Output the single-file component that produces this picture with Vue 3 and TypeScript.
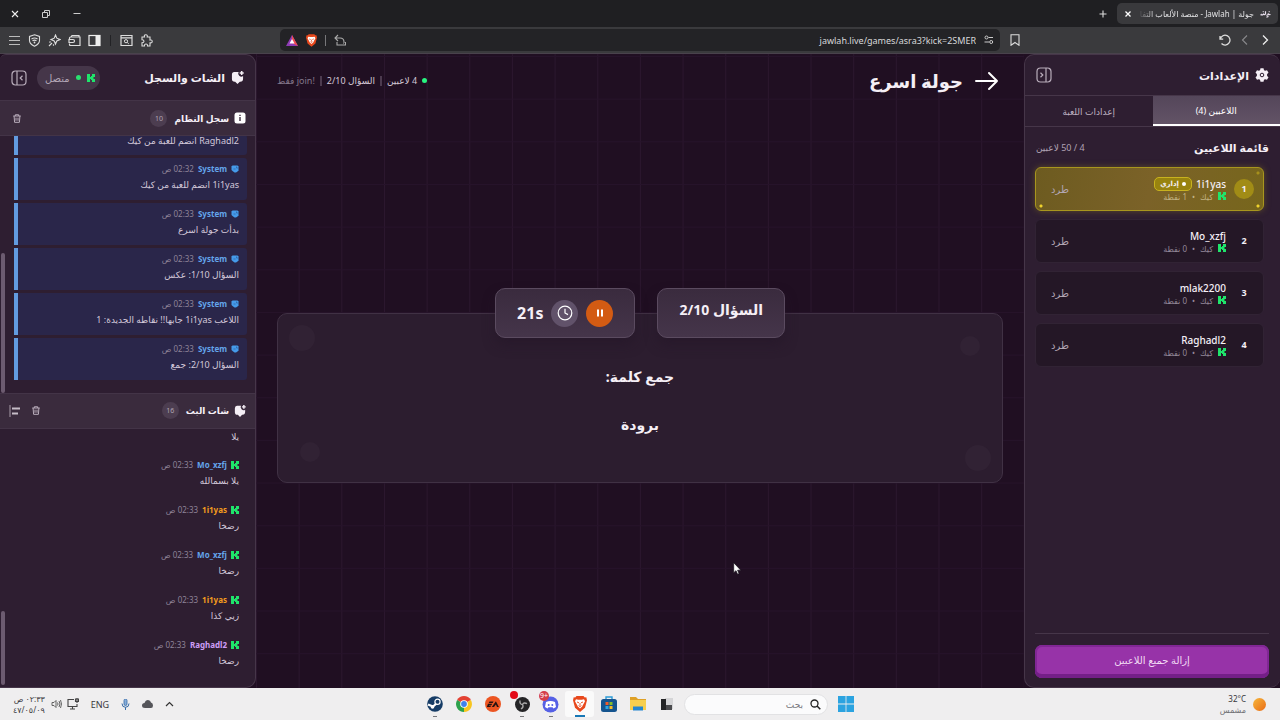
<script setup lang="ts">
import { ref } from 'vue'

interface Message { name?: string; time?: string; text: string; tone?: string }
interface Player { name: string; points: number; admin: boolean }

const players: Player[] = [
  { name: '1i1yas', points: 1, admin: true },
  { name: 'Mo_xzfj', points: 0, admin: false },
  { name: 'mlak2200', points: 0, admin: false },
  { name: 'Raghadl2', points: 0, admin: false },
]

const log: Message[] = [
  { text: 'Raghadl2 انضم للعبة من كيك' },
  { name: 'System', time: '02:32 ص', text: '1i1yas انضم للعبة من كيك', tone: 'system' },
  { name: 'System', time: '02:33 ص', text: 'بدأت جولة اسرع', tone: 'system' },
  { name: 'System', time: '02:33 ص', text: 'السؤال 1/10: عكس', tone: 'system' },
  { name: 'System', time: '02:33 ص', text: 'اللاعب 1i1yas جابها!! نقاطه الجديدة: 1', tone: 'system' },
  { name: 'System', time: '02:33 ص', text: 'السؤال 2/10: جمع', tone: 'system' },
]

const chat: Message[] = [
  { text: 'يلا' },
  { name: 'Mo_xzfj', time: '02:33 ص', text: 'يلا بسمالله', tone: 'blue' },
  { name: '1i1yas', time: '02:33 ص', text: 'رضخا', tone: 'orange' },
  { name: 'Mo_xzfj', time: '02:33 ص', text: 'رضخا', tone: 'blue' },
  { name: '1i1yas', time: '02:33 ص', text: 'زيي كذا', tone: 'orange' },
  { name: 'Raghadl2', time: '02:33 ص', text: 'رضخا', tone: 'violet' },
]

const apps = ['file', 'folder', 'store', 'brave', 'discord', 'obs', 'ea', 'chrome', 'steam']
const running = ['brave', 'discord', 'obs', 'steam']
const search = ref('')
const url = ref('jawlah.live/games/asra3?kick=2SMER')
</script>

<template>
  <div class="desktop" dir="rtl">
    <svg class="sprite" aria-hidden="true">
      <symbol id="kick" viewBox="0 0 8 8"><path d="M0 0h3v3h1V2h1V0h3v3H6.500v2H8v3H5V6H4V5H3v3H0z" fill="#1fe56b" /></symbol>
      <symbol id="bubble" viewBox="0 0 14 14"><path d="M3.500 1h4.700a3.400 3.400 0 0 0 4.800 4.500V8q0 3.500-3 3.500H9.500L7 14l-2.500-2.500H4Q1 11.500 1 8.500V4q0-3 2.500-3z" fill="currentColor" /><path d="M11.500 0v4.400M9.300 2.200h4.400" stroke="currentColor" stroke-width="1.7" /></symbol>
      <symbol id="sysicon" viewBox="0 0 8 8"><path d="M1.500.500h5l1 1v4l-1 1L5 7.500H3.500L1.500 6 .500 5V1.500z" fill="#459bea" /><path d="M5.500 1.500v1.500h1.500M2.500 4h2" fill="none" stroke="#2a5590" stroke-width=".6" /></symbol>
      <symbol id="trash" viewBox="0 0 12 12"><path d="M1.500 3h9M4 3V1.500h4V3M2.500 3l.6 7.600h5.800L9.500 3M4.800 5v3.700M7.200 5v3.700" fill="none" stroke="currentColor" stroke-width="1.2" /></symbol>
      <symbol id="collapse" viewBox="0 0 16 16"><rect x="1" y="1" width="14" height="14" rx="3.5" fill="none" stroke="currentColor" stroke-width="1.2" /><path d="M6 1v14M11.500 5.800L9.200 8l2.300 2.200" fill="none" stroke="currentColor" stroke-width="1.2" /></symbol>
      <symbol id="brave" viewBox="0 0 14 16"><path d="M3.500 0h7l1.300 1.400 1.500-.2.700 3-2 7.500L7 16l-5-4.300-2-7.500.7-3 1.500.2z" fill="#e8481c" /><path d="M3 3.200l2.200.5h3.600l2.200-.5 1 2-2.200 4-.6 1.300L7 12.600 4.800 10.500 4.200 9.200 2 5.200z" fill="#fff" /><path d="M4 6l2 .8M10 6l-2 .8M7 7v2.600M5.600 9.600L7 10.600l1.400-1" stroke="#e8481c" fill="none" stroke-width=".9" /></symbol>
    </svg>

    <header class="tabstrip">
      <div class="browser-tab">
        <svg class="favicon" viewBox="0 0 12 8"><path d="M.500 4.500q.500 1 1.500 0 1 1 2-.500 1 1.500 2 0v-3M7 5.500q2 0 2-2 .500 1.500 2.500 1M9 6q0 1.500-2 1.500M3 1.500h1M9.500 1.500h1" fill="none" stroke="#e6ddeb" stroke-width="1.3" /></svg>
        <span class="tab-title">جولة | Jawlah - منصة الألعاب التفا</span>
        <button class="icon-btn" aria-label="إغلاق التبويب"><svg width="8" height="8" viewBox="0 0 8 8"><path d="M1.5 1.5l5 5M6.5 1.5l-5 5" stroke="#fff" stroke-width="1.3" /></svg></button>
      </div>
      <button class="icon-btn new-tab" aria-label="تبويب جديد"><svg width="8" height="8" viewBox="0 0 8 8"><path d="M4 .5v7M.5 4h7" stroke="#ddd" stroke-width="1.1" /></svg></button>
      <div class="window-controls">
        <button class="icon-btn" aria-label="تصغير"><svg width="10" height="10" viewBox="0 0 10 10"><path d="M1.500 4.500h7" stroke="#ccc" /></svg></button>
        <button class="icon-btn" aria-label="استعادة"><svg width="10" height="10" viewBox="0 0 10 10"><path d="M1.5 3.500h5v5h-5zM3.500 3.500v-2h5v5h-2" fill="none" stroke="#ccc" /></svg></button>
        <button class="icon-btn" aria-label="إغلاق"><svg width="10" height="10" viewBox="0 0 10 10"><path d="M2 2l6 6M8 2L2 8" stroke="#eee" stroke-width="1.1" /></svg></button>
      </div>
    </header>

    <nav class="toolbar" aria-label="المتصفح">
      <div class="tools nav-tools">
        <button class="icon-btn" aria-label="رجوع"><svg width="12" height="12" viewBox="0 0 12 12"><path d="M4 1.5L8.500 6 4 10.500" fill="none" stroke="#eee" stroke-width="1.3" /></svg></button>
        <button class="icon-btn" aria-label="للأمام"><svg width="12" height="12" viewBox="0 0 12 12"><path d="M8 1.5L3.500 6 8 10.500" fill="none" stroke="#89898c" stroke-width="1.1" /></svg></button>
        <button class="icon-btn" aria-label="تحديث"><svg width="12" height="12" viewBox="0 0 12 12"><path d="M1 2v3.200h3.200M1.300 5A4.900 4.900 0 1 1 2.500 9.500" fill="none" stroke="#ddd" stroke-width="1.3" /></svg></button>
        <button class="icon-btn bookmark" aria-label="إشارة مرجعية"><svg width="12" height="12" viewBox="0 0 12 12"><path d="M2 .7h8v10.600L6 8.500l-4 2.800z" fill="none" stroke="#ddd" stroke-width="1.1" /></svg></button>
      </div>
      <div class="address">
        <svg width="10" height="10" viewBox="0 0 10 10"><path d="M4.500 2.500H9M.5 7H5" stroke="#ccc" /><circle cx="2.500" cy="2.500" r="1.500" fill="none" stroke="#ccc" /><circle cx="7.200" cy="7" r="1.500" fill="none" stroke="#ccc" /></svg>
        <input v-model="url" type="text" dir="ltr" aria-label="العنوان">
        <button class="icon-btn" aria-label="مشاركة"><svg width="12" height="12" viewBox="0 0 12 12"><path d="M4 1L1 4l3 3M1.500 4H6q4 0 4 4v2M3 8v3h8.500V8" fill="none" stroke="#aaa" stroke-width="1.1" /></svg></button>
        <span class="divider light"></span>
        <svg width="11" height="13"><use href="#brave" /></svg>
        <svg class="rewards" width="12" height="11" viewBox="0 0 12 11"><path d="M6 0l6 11H0z" fill="#8e3bb5" /><path d="M6 0l6 11-6-3z" fill="#ed4b50" /><path d="M6 4l2.500 4.500h-5z" fill="#fff" /></svg>
      </div>
      <div class="tools browser-tools">
        <button class="icon-btn" aria-label="الإضافات"><svg width="13" height="13" viewBox="0 0 13 13"><path d="M2 3h2.500q-.7-2.300 1.300-2.300T7.200 3H10v3q2.200-.4 2.200 1.400T10 8.800V12H7.500q.2-2-1.500-2t-1.500 2H2V8.800q2-.2 2-1.600T2 5.700z" fill="none" stroke="#ddd" stroke-width="1.1" /></svg></button>
        <button class="icon-btn" aria-label="بحث في الصفحة"><svg width="13" height="13" viewBox="0 0 13 13"><path d="M1 1.500h11v10H1zM1 3.800h11" fill="none" stroke="#ddd" stroke-width="1.2" /><circle cx="6" cy="7.200" r="1.600" fill="none" stroke="#ddd" /><path d="M7.200 8.400l1.600 1.500" stroke="#ddd" /></svg></button>
        <span class="divider"></span>
        <button class="icon-btn" aria-label="الشريط الجانبي"><svg width="13" height="13" viewBox="0 0 13 13"><rect x="1" y="1.500" width="11" height="10" fill="none" stroke="#eee" stroke-width="1.2" /><path d="M7.500 2H12v9H7.500z" fill="#eee" /></svg></button>
        <button class="icon-btn" aria-label="المحفظة"><svg width="13" height="13" viewBox="0 0 13 13"><path d="M1.500 5V4q0-1 1-1H12v8.500H2.500q-1 0-1-1V9.500M3 3l1-1.500h7V3M1 5.500h4q1.500 0 1.500 1.500T5 8.500H1z" fill="none" stroke="#ddd" stroke-width="1.2" /></svg></button>
        <button class="icon-btn" aria-label="المساعد"><svg width="13" height="13" viewBox="0 0 13 13"><path d="M7.500 1l1.300 3.200L12 5.500 8.800 7 7.500 10 6.200 7 3 5.500l3.200-1.300zM1 12l3-3M1.500 8.500l1-1M5 11.500l1-1" fill="none" stroke="#ddd" stroke-width="1.1" /></svg></button>
        <button class="icon-btn" aria-label="VPN"><svg width="13" height="13" viewBox="0 0 13 13"><path d="M6.500.8l5 1.700v4q0 3.500-5 5.700-5-2.200-5-5.700v-4z" fill="none" stroke="#ddd" stroke-width="1.1" /><path d="M3.500 5q3-2 6 0M4.500 6.800q2-1.300 4 0" fill="none" stroke="#ddd" stroke-width="1.1" /><circle cx="6.500" cy="8.500" r=".9" fill="#ddd" /></svg></button>
        <button class="icon-btn" aria-label="القائمة"><svg width="13" height="13" viewBox="0 0 13 13"><path d="M1 2.500h11M1 6.500h11M1 10.500h11" stroke="#bbb" stroke-width="1" /></svg></button>
      </div>
    </nav>

    <div class="page">
      <aside class="panel settings">
        <header class="settings-head">
          <svg width="14" height="14" viewBox="0 0 14 14"><path d="M5.500.300h3l.500 1.900 1.100.600 1.900-.600 1.500 2.600-1.400 1.300v1.800l1.400 1.300-1.500 2.600-1.900-.6-1.100.6-.500 1.900h-3L5 11.800l-1.100-.6-1.900.6L.500 9.200l1.400-1.300V6.100L.500 4.800 2 2.200l1.900.6L5 2.200z" fill="currentColor" /><circle cx="7" cy="7" r="1.8" fill="none" stroke="#2e1e31" stroke-width="1" /></svg>
          <h2>الإعدادات</h2>
          <button class="icon-btn push flip" aria-label="طي الإعدادات"><svg width="16" height="16"><use href="#collapse" /></svg></button>
        </header>
        <div class="tabs" role="tablist">
          <button role="tab" aria-selected="true" class="tab active">اللاعبين (4)</button>
          <button role="tab" aria-selected="false" class="tab">إعدادات اللعبة</button>
        </div>
        <div class="list-head"><h3>قائمة اللاعبين</h3><span>4 / 50 لاعبين</span></div>
        <ul class="players">
          <li v-for="(p, i) in players" :key="p.name" class="player" :class="{ admin: p.admin }">
            <span class="rank">{{ i + 1 }}</span>
            <div class="who">
              <div class="who-name"><strong>{{ p.name }}</strong><span v-if="p.admin" class="badge"><i></i>إداري</span></div>
              <div class="who-meta"><svg width="8" height="8"><use href="#kick" /></svg><span>كيك</span><span>•</span><span>{{ p.points }} نقطة</span></div>
            </div>
            <button class="kick-btn">طرد</button>
          </li>
        </ul>
        <footer class="settings-foot"><button class="remove-all">إزالة جميع اللاعبين</button></footer>
      </aside>

      <main class="stage">
        <header class="stage-head">
          <button class="icon-btn" aria-label="رجوع"><svg width="24" height="20" viewBox="0 0 24 20"><path d="M1 10h21M14 2l8 8-8 8" fill="none" stroke="#fff" stroke-width="2" stroke-linecap="round" stroke-linejoin="round" /></svg></button>
          <h1>جولة اسرع</h1>
          <div class="status">
            <i class="dot"></i><span>4 لاعبين</span><b></b><span>السؤال 2/10</span><b></b><span class="dim">!join فقط</span>
          </div>
        </header>
        <section class="round">
          <div class="pills">
            <div class="pill question-no">السؤال 2/10</div>
            <div class="pill timer">
              <button class="round-btn pause" aria-label="إيقاف مؤقت"><svg width="8" height="8" viewBox="0 0 8 8"><path d="M1 .5h2v7H1zM5 .5h2v7H5z" fill="#fff" /></svg></button>
              <span class="round-btn"><svg width="16" height="16" viewBox="0 0 16 16"><circle cx="8" cy="8" r="6.800" fill="none" stroke="#fff" stroke-width="1.2" /><path d="M8 3.800V8l3 1.600" fill="none" stroke="#fff" stroke-width="1.2" /></svg></span>
              <time>21s</time>
            </div>
          </div>
          <div class="question">
            <span class="orb o1"></span><span class="orb o2"></span><span class="orb o3"></span><span class="orb o4"></span>
            <p>جمع كلمة:</p>
            <p>برودة</p>
          </div>
        </section>
      </main>

      <aside class="panel feed">
        <header class="feed-head">
          <svg width="13" height="13"><use href="#bubble" /></svg>
          <h2>الشات والسجل</h2>
          <span class="connected"><svg width="8" height="8"><use href="#kick" /></svg><i class="dot"></i>متصل</span>
          <button class="icon-btn" aria-label="طي الشات"><svg width="16" height="16"><use href="#collapse" /></svg></button>
        </header>
        <header class="sub-head">
          <svg width="12" height="12" viewBox="0 0 12 12"><rect x=".5" y=".5" width="11" height="11" rx="2.5" fill="#fff" /><path d="M6 5v4M6 2.700v1.300" stroke="#3b2b3d" stroke-width="1.4" /></svg>
          <h3>سجل النظام</h3><span class="count">10</span>
          <button class="icon-btn push" aria-label="مسح السجل"><svg width="10" height="11"><use href="#trash" /></svg></button>
        </header>
        <ul class="messages log">
          <li v-for="(m, i) in log" :key="i" class="message" :class="{ tail: !m.name }">
            <div v-if="m.name" class="meta"><svg width="8" height="8"><use href="#sysicon" /></svg><strong :class="m.tone">{{ m.name }}</strong><time>{{ m.time }}</time></div>
            <p>{{ m.text }}</p>
          </li>
        </ul>
        <header class="sub-head">
          <svg width="12" height="12"><use href="#bubble" /></svg>
          <h3>شات البث</h3><span class="count">16</span>
          <button class="icon-btn push" aria-label="مسح الشات"><svg width="10" height="11"><use href="#trash" /></svg></button>
          <button class="icon-btn align" aria-label="محاذاة"><svg width="12" height="12" viewBox="0 0 12 12"><path d="M1 0v12" stroke="#a79ca9" /><path d="M3 3.500h8M3 8.500h6" stroke="#c6bdc8" stroke-width="2" /></svg></button>
        </header>
        <ul class="messages chat">
          <li v-for="(m, i) in chat" :key="i" class="message" :class="{ tail: !m.name }">
            <div v-if="m.name" class="meta"><svg width="8" height="8"><use href="#kick" /></svg><strong :class="m.tone">{{ m.name }}</strong><time>{{ m.time }}</time></div>
            <p>{{ m.text }}</p>
          </li>
        </ul>
      </aside>
    </div>

    <footer class="taskbar">
      <div class="weather">
        <svg width="13" height="13" viewBox="0 0 13 13"><defs><linearGradient id="sun" x2="1" y2="1"><stop stop-color="#f6b73c" /><stop offset="1" stop-color="#e96b16" /></linearGradient></defs><circle cx="6.500" cy="6.500" r="6.500" fill="url(#sun)" /></svg>
        <div><span dir="ltr">32°C</span><span class="soft">مشمس</span></div>
      </div>
      <div class="dock">
        <button class="app" aria-label="ابدأ"><svg width="16" height="16" viewBox="0 0 16 16"><path d="M0 0h7.600v7.600H0zM8.400 0H16v7.600H8.400zM0 8.400h7.600V16H0zM8.400 8.400H16V16H8.400z" fill="#2ba3e0" /></svg></button>
        <label class="search"><svg width="11" height="11" viewBox="0 0 11 11"><circle cx="4.500" cy="4.500" r="3.500" fill="none" stroke="#222" stroke-width="1.3" /><path d="M7 7l3.300 3.300" stroke="#222" stroke-width="1.5" /></svg><input v-model="search" type="text" placeholder="بحث" aria-label="بحث"></label>
        <button v-for="a in apps" :key="a" class="app" :class="{ running: running.includes(a), current: a === 'brave' }" :aria-label="a">
          <svg v-if="a === 'file'" width="16" height="16" viewBox="0 0 16 16"><path d="M6 2h8v11H6z" fill="#d5d5d7" /><path d="M2 3h5v6h6v5H2z" fill="#242426" /><path d="M7 9h6v5H7z" fill="#4b4b4e" /></svg>
          <svg v-else-if="a === 'folder'" width="18" height="16" viewBox="0 0 18 16"><path d="M1 1h6l2 2h8v5H1z" fill="#dfa127" /><path d="M1 4h16v10H1z" fill="#f7cf4d" /><path d="M4 10.500h10v4H4z" fill="#2587cf" /></svg>
          <svg v-else-if="a === 'store'" width="16" height="16" viewBox="0 0 16 16"><path d="M5 4V1h6v3" fill="none" stroke="#2b9bd8" stroke-width="1.4" /><rect y="3" width="16" height="13" rx="2.500" fill="#15548f" /><path d="M4.500 6h3v3h-3z" fill="#ef5b2b" /><path d="M8.500 6h3v3h-3z" fill="#84bd2d" /><path d="M4.500 10h3v3h-3z" fill="#2ba6e4" /><path d="M8.500 10h3v3h-3z" fill="#f9bd24" /></svg>
          <svg v-else-if="a === 'brave'" width="14" height="16"><use href="#brave" /></svg>
          <svg v-else-if="a === 'discord'" width="17" height="17" viewBox="0 0 17 17"><circle cx="8.500" cy="8.500" r="8" fill="#5560e5" /><path d="M4 6q4.500-2 9 0l1 5-2.500 1.500-1-1.200h-4l-1 1.200L3 11z" fill="#fff" /><circle cx="6.700" cy="9" r="1" fill="#5560e5" /><circle cx="10.300" cy="9" r="1" fill="#5560e5" /></svg>
          <svg v-else-if="a === 'obs'" width="16" height="16" viewBox="0 0 16 16"><circle cx="8.500" cy="8.500" r="7.500" fill="#242426" /><path d="M8.500 8.500q-3 0-2.500-4M8.500 8.500q1.500-2.600 4.500-.8M8.500 8.500q1.500 2.600-1.500 4.500" fill="none" stroke="#aaa" stroke-width="1.4" /></svg>
          <svg v-else-if="a === 'ea'" width="16" height="16" viewBox="0 0 16 16"><circle cx="8" cy="8" r="8" fill="#ec5522" /><path d="M4.500 5.500h4L7.700 7H3.700zM3 7.700h4.200L6.400 9.200H4.200l-.300.600h2.200l-.7 1.200H1.800zM6.800 11l4.100-5.700 3 5.700h-1.900l-1.100-2.600L9 11z" fill="#241312" /></svg>
          <svg v-else-if="a === 'chrome'" width="16" height="16" viewBox="0 0 16 16"><path d="M8 8L1.100 4A8 8 0 0 1 14.900 4z" fill="#e34133" /><path d="M8 8l6.900-4A8 8 0 0 1 8 16z" fill="#f8c51f" /><path d="M8 8v8A8 8 0 0 1 1.100 4z" fill="#2da14c" /><circle cx="8" cy="8" r="3.800" fill="#fff" /><circle cx="8" cy="8" r="2.900" fill="#3f81ec" /></svg>
          <svg v-else width="16" height="16" viewBox="0 0 16 16"><circle cx="8" cy="8" r="7.800" fill="#163c66" /><path d="M1 8.500l5 2L10 7" fill="none" stroke="#fff" stroke-width="2.2" /><circle cx="10.500" cy="5.800" r="2.600" fill="#163c66" stroke="#fff" stroke-width="1.2" /><circle cx="5.500" cy="11" r="1.800" fill="#fff" /></svg>
          <span v-if="a === 'discord'" class="alert">9+</span>
          <span v-if="a === 'obs'" class="alert rec"></span>
        </button>
      </div>
      <div class="tray">
        <button class="icon-btn" aria-label="إظهار الأيقونات المخفية"><svg width="9" height="9" viewBox="0 0 9 9"><path d="M1 6l3.500-3.500L8 6" fill="none" stroke="#333" stroke-width="1.2" /></svg></button>
        <svg width="11" height="8" viewBox="0 0 11 8"><path d="M3 8Q0 8 0 5.500T2.500 3Q3.500 0 6 0t3 2.500Q11 3 11 5.500T9 8z" fill="#55555a" /></svg>
        <svg width="9" height="11" viewBox="0 0 9 11"><rect x="3" y="0" width="3" height="6.500" rx="1.500" fill="#86acd8" stroke="#356ba8" stroke-width=".8" /><path d="M1 4.500Q1 8.300 4.500 8.300T8 4.500M4.500 8.300V11" fill="none" stroke="#356ba8" /></svg>
        <span class="lang">ENG</span>
        <span class="devices">
          <svg width="12" height="12" viewBox="0 0 12 12"><path d="M7 1.500H1v7h9V6M3 11h5M5.500 8.500V11M10 0v5M8.500 1h3v2.500h-3z" fill="none" stroke="#444" stroke-width="1.1" /></svg>
          <svg width="11" height="10" viewBox="0 0 11 10"><path d="M1 3.500h2L5 1.500v7l-2-2H1zM6.500 3.500q1 1.500 0 3M8 2q2 3 0 6M9.500 1q2 4 0 8" fill="none" stroke="#555" stroke-width=".9" /></svg>
        </span>
        <div class="clock"><span>٠٢:٣٣ ص</span><span>٤٧/٠٥/٠٩</span></div>
      </div>
    </footer>

    <svg class="pointer" width="9" height="13" viewBox="0 0 9 13" aria-hidden="true"><path d="M.7.700v10l2.300-2 1.600 3.600 1.500-.7L4.600 8.200h3.200z" fill="#fff" stroke="#16101a" stroke-width=".7" /></svg>
  </div>
</template>

<style>
body { margin: 0; background: #200f22; }
</style>

<style scoped>
* { box-sizing: border-box; }
.desktop {
  position: relative;
  display: flex;
  flex-direction: column;
  height: 100vh;
  overflow: hidden;
  font-family: "Noto Sans", "DejaVu Sans", sans-serif;
  font-size: 9px;
  color: #f5eff6;
}
.sprite { position: absolute; width: 0; height: 0; }
svg { display: block; flex: none; }
h1, h2, h3, p, ul { margin: 0; padding: 0; }
ul { list-style: none; }
button, input { font: inherit; color: inherit; border: 0; padding: 0; background: none; }
input { outline: 0; min-width: 0; }
.icon-btn { display: flex; align-items: center; justify-content: center; color: #b9adbb; }
.push { margin-inline-start: auto; }

.tabstrip { display: flex; align-items: center; height: 27px; padding: 0 2px; background: #1f1f22; flex: none; }
.browser-tab { display: flex; align-items: center; gap: 6px; width: 161px; height: 21px; padding: 0 7px; background: #39393c; border-radius: 5px; }
.favicon { width: 11px; height: 8px; }
.tab-title { flex: 1; white-space: nowrap; font-size: 8px; color: #e2e2e4; mask-image: linear-gradient(to left, #000 85%, transparent); }
.new-tab { margin-inline-start: 10px; }
.window-controls { display: flex; gap: 21px; margin-inline-start: auto; padding-inline-end: 8px; }

.toolbar { display: grid; grid-template-columns: 7fr 18fr 7fr; align-items: center; height: 27px; background: #3a3a3d; border-bottom: 1px solid #49424c; flex: none; }
.tools { display: flex; align-items: center; gap: 8px; padding: 0 9px; }
.nav-tools .bookmark { margin-inline-start: auto; }
.browser-tools { justify-content: flex-end; gap: 7px; padding-inline-end: 8px; }
.divider { width: 1px; height: 11px; margin: 0 2px; background: #222225; }
.divider.light { margin: 0; background: #77777a; }
.address { display: flex; align-items: center; gap: 8px; height: 22px; padding: 0 6px; background: #232326; border-radius: 5px; }
.address input { flex: 1; text-align: right; font-size: 9px; color: #d8d8da; }

.page { display: flex; flex: 1; min-height: 0; background: #200f22; }
.panel { display: flex; flex-direction: column; width: 20%; background: #2e1e31; border: 1px solid #463649; border-radius: 10px; flex: none; overflow: hidden; }
.feed { border-left: 0; border-top-left-radius: 6px; border-bottom-left-radius: 0; }
.settings { border-right: 0; }
.settings-head, .feed-head { display: flex; align-items: center; gap: 6px; flex: none; }
.settings-head { height: 41px; padding: 0 11px; border-bottom: 1px solid #463649; }
h2 { font-size: 11px; font-weight: 700; }
.flip svg { transform: scaleX(-1); }
.tabs { display: grid; grid-template-columns: 1fr 1fr; height: 31px; border-bottom: 1px solid #463649; }
.tab { color: #bdb0c0; font-size: 9px; }
.tab.active { color: #fff; background: linear-gradient(#54465a, #625366); border-bottom: 2px solid #fff; }
.list-head { display: flex; align-items: center; justify-content: space-between; height: 40px; padding: 0 11px; }
.list-head span { color: #b0a3b3; }
h3 { font-size: 9px; font-weight: 700; }
.list-head h3 { font-size: 11px; }
.players { display: flex; flex-direction: column; gap: 8px; padding: 0 16px 0 10px; flex: 1; }
.player { display: flex; align-items: center; height: 44px; padding: 0 9px; background: #241726; border: 1px solid #312334; border-radius: 6px; }
.player.admin { background: radial-gradient(circle at 5px 38px, #f0d32c 0 1px, transparent 2px), radial-gradient(circle at calc(100% - 5px) 38px, #f0d32c 0 1px, transparent 2px), radial-gradient(circle at calc(100% - 5px) 5px, #a6901c 0 1px, transparent 2px), linear-gradient(100deg, #6d5b20, #7b6228 50%, #77661c); border-color: #a8961e; box-shadow: 0 0 6px #5e4c28; }
.rank { width: 20px; height: 20px; line-height: 20px; border-radius: 50%; text-align: center; font-weight: 700; }
.admin .rank { background: #a18c16; }
.who { flex: 1; padding-inline-start: 8px; }
.who-name { display: flex; align-items: center; gap: 4px; height: 14px; }
.who-name strong { font-size: 10px; font-weight: 500; }
.badge { display: flex; align-items: center; gap: 3px; height: 14px; padding: 0 5px; border: 1px solid #c8b21e; border-radius: 5px; background: #98830f; font-size: 7px; font-weight: 700; }
.badge i { width: 4px; height: 4px; border-radius: 50%; background: #fff; }
.who-meta { display: flex; align-items: center; gap: 5px; height: 11px; font-size: 8px; color: #94889a; }
.admin .who-meta { color: #c2b383; }
.kick-btn { margin-inline-end: 6px; font-size: 10px; color: #b2a6b4; }
.settings-foot { margin: 0 11px 9px 10px; padding-top: 11px; border-top: 1px solid #463649; }
.remove-all { display: block; width: 100%; height: 33px; padding-bottom: 3px; border-radius: 7px; background: #9733a8; box-shadow: inset 0 -4px #741f88, inset 0 0 0 2px #812795; font-size: 10px; color: #f2dcf5; }

.stage { flex: 1; min-width: 0; display: flex; flex-direction: column; padding: 0 21px; background-color: #200f22; background-image: linear-gradient(#26132a 1px, transparent 1px), linear-gradient(90deg, #2b172e 1px, transparent 1px); background-size: calc(100vw / 30) calc(100vw / 30); background-position: 0 2px; }
.stage-head { display: flex; align-items: center; height: 53px; flex: none; }
h1 { margin-inline-start: 12px; font-size: 18px; font-weight: 700; }
.stage-head .icon-btn { margin-inline-start: 4px; }
.status { display: flex; align-items: center; gap: 5px; margin-inline-start: auto; color: #d4c8d6; font-size: 9px; }
.status b { width: 2px; height: 10px; background: #4c3b4f; }
.dot { width: 5px; height: 5px; border-radius: 50%; background: #2ae06f; }
.status .dot { background: #28f580; }
.dim { color: #84778a; }
.round { flex: 1; display: flex; flex-direction: column; justify-content: center; padding-bottom: 24px; }
.pills { display: flex; justify-content: center; gap: 22px; z-index: 1; }
.pill { height: 50px; padding: 0 21px; border: 1px solid #5b4b60; border-radius: 10px; background: linear-gradient(#3a2b3e, #45354a); box-shadow: 0 7px 12px #24152880; font-weight: 700; }
.question-no { font-size: 14px; line-height: 42px; }
.timer { display: flex; align-items: center; gap: 8px; font-size: 16px; }
.round-btn { display: flex; align-items: center; justify-content: center; width: 27px; height: 27px; border-radius: 50%; background: #61526a; }
.pause { background: #d35b13; }
.question { position: relative; display: flex; flex-direction: column; align-items: center; height: 170px; margin-top: -25px; padding-top: 51px; gap: 24px; background: #2c1d2f; border: 1px solid #403144; border-radius: 10px; font-size: 14px; line-height: 24px; font-weight: 700; }
.orb { position: absolute; width: 26px; height: 26px; border-radius: 50%; background: #312234; }
.o1 { left: 11px; top: 11px; }
.o2 { left: 22px; bottom: 20px; width: 20px; height: 20px; }
.o3 { right: 22px; top: 22px; width: 20px; height: 20px; }
.o4 { right: 11px; bottom: 11px; }

.feed-head { height: 45px; padding: 0 11px; }
.connected { display: flex; align-items: center; gap: 6px; height: 24px; margin-inline: auto 4px; padding: 0 5px 0 8px; border-radius: 12px; background: #453649; font-size: 10px; color: #b2a5b5; }
.sub-head { display: flex; align-items: center; gap: 5px; height: 36px; padding: 0 9px 0 12px; background: #3a2b3d; border-block: 1px solid #433447; flex: none; }
.count { width: 17px; height: 17px; margin-inline-start: 2px; line-height: 17px; border-radius: 50%; text-align: center; background: #4c3d50; color: #b2a5b4; font-size: 7px; }
.align { margin-inline-start: 5px; }
.sub-head:has(.align) { padding-left: 9px; }
.messages { position: relative; display: flex; flex-direction: column; justify-content: flex-end; min-height: 0; overflow: hidden; padding-inline: 8px 14px; }
.messages::after { content: ""; position: absolute; left: 1px; bottom: 0; width: 4px; border-radius: 2px; background: #6c5b70; }
.log { flex: 42; gap: 3px; padding-bottom: 13px; }
.log::after { height: 140px; }
.chat { flex: 43; padding-bottom: 9px; }
.chat::after { height: 74px; bottom: 2px; }
.message { flex: none; padding-inline-start: 8px; }
.log .message { height: 42px; padding-top: 4px; border-left: 4px solid #629be0; border-radius: 0 3px 3px 0; background: #2a264a; }
.chat .message { height: 45px; padding-top: 4px; }
.log .message.tail { height: 20px; padding-top: 0; }
.log .tail p { line-height: 12px; }
.chat .message.tail { height: 23px; padding-top: 0; }
.chat .tail p { line-height: 14px; }
.meta { display: flex; align-items: center; gap: 4px; height: 14px; }
.chat .meta { height: 15px; }
.meta strong { font-size: 8px; font-weight: 700; }
.meta time { font-size: 8px; color: #8f8398; }
.message p { font-size: 9px; line-height: 18px; color: #d4c9da; white-space: nowrap; }
.system, .blue { color: #64a5eb; }
.orange { color: #f39c1e; }
.violet { color: #cd9df5; }

.taskbar { display: grid; grid-template-columns: 1fr auto 1fr; align-items: center; height: 32px; background: #efeeef; color: #38383c; flex: none; }
.weather { display: flex; align-items: center; gap: 7px; padding-inline-start: 14px; font-size: 8px; }
.weather span { display: block; line-height: 11px; text-align: right; }
.weather .soft { color: #6d6d72; font-size: 8px; }
.dock { display: flex; align-items: center; }
.app { position: relative; display: flex; align-items: center; justify-content: center; width: 29px; height: 26px; padding: 0; border-radius: 3px; }
.current { background: #fafafa; }
.running::after { content: ""; position: absolute; bottom: 0; width: 4px; height: 1px; background: #77777a; }
.current::after { width: 10px; height: 2px; background: #1777b5; }
.alert { position: absolute; left: 3px; top: 0; width: 10px; height: 10px; line-height: 10px; border-radius: 50%; background: #d43e4b; color: #fff; font-size: 7px; direction: ltr; }
.rec { width: 8px; height: 8px; background: #e30a17; }
.search { display: flex; align-items: center; gap: 7px; width: 144px; height: 21px; margin: 0 3px; padding: 0 6px; border: 1px solid #e2e2e4; border-radius: 11px; background: #fbfbfc; }
.search input { flex: 1; font-size: 9px; }
.search input::placeholder { color: #77777c; opacity: 1; }
.tray { display: flex; align-items: center; justify-content: flex-end; gap: 12px; padding-inline-end: 13px; font-size: 9px; }
.devices { display: flex; align-items: center; gap: 5px; }
.clock span { display: block; line-height: 11px; font-size: 8px; white-space: nowrap; }
.clock { margin-inline-start: -6px; }
.pointer { position: absolute; left: 733px; top: 562px; }
</style>
